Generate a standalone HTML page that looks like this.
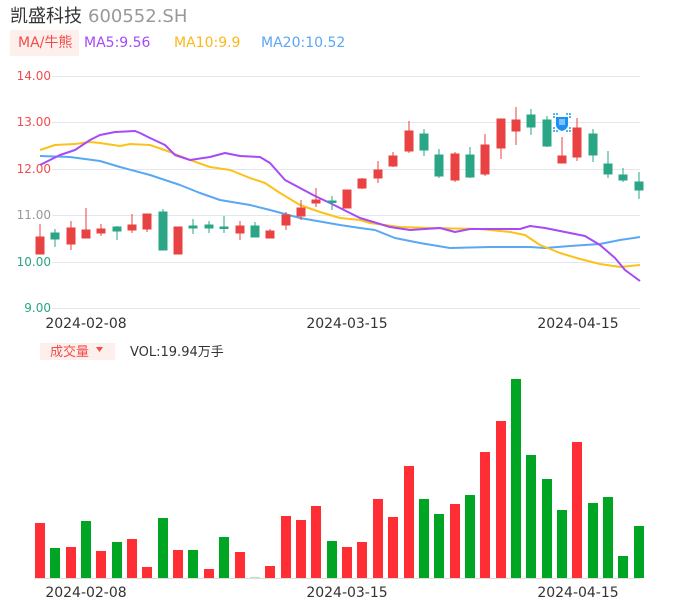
<!DOCTYPE html>
<html><head><meta charset="utf-8"><style>
body{margin:0;background:#fff;width:686px;height:606px;overflow:hidden;font-family:"DejaVu Sans","Noto Sans CJK SC",sans-serif}
svg{position:absolute;left:0;top:0}
</style></head><body>
<svg width="686" height="606" xmlns="http://www.w3.org/2000/svg" font-family="DejaVu Sans, Noto Sans CJK SC, sans-serif">
<text x="10" y="22" font-size="18" fill="#333" font-family="Noto Sans CJK SC, sans-serif">凯盛科技</text>
<text x="88" y="22" font-size="18" fill="#999">600552.SH</text>
<rect x="10" y="30" width="69" height="26" fill="#fdf0ec"/>
<text x="18" y="47" font-size="14" fill="#f24b4b">MA/<tspan font-family="Noto Sans CJK SC, sans-serif">牛熊</tspan></text>
<text x="84" y="47" font-size="14" fill="#a649f7">MA5:9.56</text>
<text x="174" y="47" font-size="14" fill="#fcb81a">MA10:9.9</text>
<text x="261" y="47" font-size="14" fill="#5aa7f3">MA20:10.52</text>
<g stroke="#e3e6ef" stroke-width="1">
<line x1="52" x2="640" y1="76.5" y2="76.5"/><line x1="52" x2="640" y1="122.5" y2="122.5"/><line x1="52" x2="640" y1="169.5" y2="169.5"/><line x1="52" x2="640" y1="215.5" y2="215.5"/><line x1="52" x2="640" y1="262.5" y2="262.5"/><line x1="52" x2="640" y1="308.5" y2="308.5"/>
</g>
<g font-size="12" text-anchor="end">
<text x="51" y="80" fill="#f24b4b">14.00</text><text x="51" y="126" fill="#f24b4b">13.00</text><text x="51" y="173" fill="#f24b4b">12.00</text><text x="51" y="219" fill="#999">11.00</text><text x="51" y="266" fill="#2aa586">10.00</text><text x="51" y="312" fill="#2aa586">9.00</text>
</g>
<g font-size="14" fill="#333" text-anchor="middle">
<text x="86" y="328">2024-02-08</text><text x="347" y="328">2024-03-15</text><text x="578" y="328">2024-04-15</text>
<text x="86" y="597">2024-02-08</text><text x="347" y="597">2024-03-15</text><text x="578" y="597">2024-04-15</text>
</g>
<g fill="none" stroke-width="2" stroke-linejoin="round">
<polyline stroke="#5aa7f3" points="40,156 70,157 100,161 120,167 150,175 180,185 200,193 220,200 250,205 270,210 300,218 340,225 360,228 375,230 395,238 420,243 450,248 490,247 530,247 545,248 570,246 600,244 620,240 640,237"/>
<polyline stroke="#fcc21a" points="40,150 55,145 75,144 90,142 100,143 120,146 130,144 150,145 170,152 190,160 210,167 230,170 250,178 265,183 280,193 300,205 320,212 340,218 360,220 370,223 400,227 430,228 480,229 510,232 525,235 540,245 560,253 580,259 600,264 620,267 640,265"/>
<polyline stroke="#a649f7" points="40,165 60,155 75,150 90,140 100,135 115,132 135,131 140,133 150,138 165,145 175,155 190,160 210,157 225,153 240,156 260,157 270,163 285,180 300,188 315,196 330,203 360,218 390,227 410,230 440,228 455,232 470,229 520,229 530,226 545,228 570,233 585,236 600,245 615,258 625,270 640,281"/>
</g>
<g stroke-width="1">
<g stroke="#e84242" fill="#e84242">
<line x1="40" x2="40" y1="224" y2="254"/><rect x="36" y="237" width="8" height="17"/>
<line x1="71" x2="71" y1="221" y2="250"/><rect x="67" y="228" width="8" height="16"/>
<line x1="86" x2="86" y1="208" y2="238"/><rect x="82" y="230" width="8" height="8"/>
<line x1="101" x2="101" y1="224" y2="236"/><rect x="97" y="229" width="8" height="4"/>
<line x1="132" x2="132" y1="214" y2="233"/><rect x="128" y="225" width="8" height="5"/>
<line x1="147" x2="147" y1="214" y2="232"/><rect x="143" y="214" width="8" height="15"/>
<rect x="174" y="227" width="8" height="27"/>
<line x1="240" x2="240" y1="221" y2="240"/><rect x="236" y="226" width="8" height="7"/>
<line x1="270" x2="270" y1="229" y2="238"/><rect x="266" y="231" width="8" height="7"/>
<line x1="286" x2="286" y1="212" y2="230"/><rect x="282" y="215" width="8" height="10"/>
<line x1="301" x2="301" y1="200" y2="220"/><rect x="297" y="208" width="8" height="8"/>
<line x1="316" x2="316" y1="188" y2="207"/><rect x="312" y="200" width="8" height="3"/>
<rect x="343" y="190" width="8" height="18"/>
<line x1="362" x2="362" y1="178" y2="189"/><rect x="358" y="179" width="8" height="9"/>
<line x1="378" x2="378" y1="161" y2="183"/><rect x="374" y="170" width="8" height="8"/>
<line x1="393" x2="393" y1="152" y2="167"/><rect x="389" y="156" width="8" height="10"/>
<line x1="409" x2="409" y1="121" y2="153"/><rect x="405" y="131" width="8" height="20"/>
<line x1="455" x2="455" y1="152" y2="182"/><rect x="451" y="154" width="8" height="26"/>
<line x1="485" x2="485" y1="134" y2="176"/><rect x="481" y="145" width="8" height="29"/>
<line x1="501" x2="501" y1="119" y2="159"/><rect x="497" y="119" width="8" height="29"/>
<line x1="516" x2="516" y1="107" y2="145"/><rect x="512" y="120" width="8" height="11"/>
<line x1="562" x2="562" y1="137" y2="163"/><rect x="558" y="156" width="8" height="7"/>
<line x1="577" x2="577" y1="118" y2="161"/><rect x="573" y="128" width="8" height="29"/>
</g>
<g stroke="#2aa586" fill="#2aa586">
<line x1="55" x2="55" y1="229" y2="247"/><rect x="51" y="233" width="8" height="6"/>
<line x1="117" x2="117" y1="226" y2="240"/><rect x="113" y="227" width="8" height="4"/>
<line x1="163" x2="163" y1="209" y2="250"/><rect x="159" y="212" width="8" height="38"/>
<line x1="193" x2="193" y1="219" y2="234"/><rect x="189" y="226" width="8" height="2"/>
<line x1="209" x2="209" y1="221" y2="233"/><rect x="205" y="225" width="8" height="3"/>
<line x1="224" x2="224" y1="216" y2="233"/><rect x="220" y="227" width="8" height="1.5"/>
<line x1="255" x2="255" y1="222" y2="237"/><rect x="251" y="226" width="8" height="11"/>
<line x1="332" x2="332" y1="196" y2="210"/><rect x="328" y="201" width="8" height="1.5"/>
<line x1="424" x2="424" y1="129" y2="156"/><rect x="420" y="134" width="8" height="16"/>
<line x1="439" x2="439" y1="149" y2="178"/><rect x="435" y="155" width="8" height="21"/>
<line x1="470" x2="470" y1="147" y2="178"/><rect x="466" y="155" width="8" height="22"/>
<line x1="531" x2="531" y1="109" y2="135"/><rect x="527" y="115" width="8" height="12"/>
<line x1="547" x2="547" y1="116" y2="147"/><rect x="543" y="120" width="8" height="26"/>
<line x1="593" x2="593" y1="129" y2="162"/><rect x="589" y="134" width="8" height="21"/>
<line x1="608" x2="608" y1="151" y2="178"/><rect x="604" y="164" width="8" height="10"/>
<line x1="623" x2="623" y1="168" y2="182"/><rect x="619" y="175" width="8" height="5"/>
<line x1="639" x2="639" y1="172" y2="199"/><rect x="635" y="182" width="8" height="8"/>
</g>
</g>
<g>
<path d="M554 118v-4h4M566 114h4v4M570 127v4h-4M558 131h-4v-4" stroke="#1e9bf5" stroke-width="1.5" fill="none" stroke-dasharray="2 1"/>
<path d="M556 117h12v8q0 4-6 6q-6-2-6-6z" fill="#1e8ff5"/>
<rect x="559" y="119" width="6" height="6" fill="#7cc4ff"/>
</g>
<rect x="40" y="343" width="75" height="17" fill="#fdf0ec"/>
<text x="50" y="356" font-size="13" fill="#f24b4b" font-family="Noto Sans CJK SC, sans-serif">成交量</text>
<path d="M96 347h7l-3.5 5z" fill="#f24b4b"/>
<text x="130" y="356" font-size="13" fill="#333">VOL:19.94<tspan font-family="Noto Sans CJK SC, sans-serif">万手</tspan></text>
<line x1="34" x2="640" y1="578.5" y2="578.5" stroke="#ddd"/>
<g fill="#ff2e35">
<rect x="35" y="523" width="10" height="55"/><rect x="66" y="547" width="10" height="31"/><rect x="96" y="551" width="10" height="27"/><rect x="127" y="539" width="10" height="39"/><rect x="142" y="567" width="10" height="11"/><rect x="173" y="550" width="10" height="28"/><rect x="204" y="569" width="10" height="9"/><rect x="235" y="552" width="10" height="26"/><rect x="265" y="566" width="10" height="12"/><rect x="281" y="516" width="10" height="62"/><rect x="296" y="520" width="10" height="58"/><rect x="311" y="506" width="10" height="72"/><rect x="342" y="547" width="10" height="31"/><rect x="357" y="542" width="10" height="36"/><rect x="373" y="499" width="10" height="79"/><rect x="388" y="517" width="10" height="61"/><rect x="404" y="466" width="10" height="112"/><rect x="450" y="504" width="10" height="74"/><rect x="480" y="452" width="10" height="126"/><rect x="496" y="421" width="10" height="157"/><rect x="572" y="442" width="10" height="136"/>
</g>
<g fill="#00a524">
<rect x="50" y="548" width="10" height="30"/><rect x="81" y="521" width="10" height="57"/><rect x="112" y="542" width="10" height="36"/><rect x="158" y="518" width="10" height="60"/><rect x="188" y="550" width="10" height="28"/><rect x="219" y="537" width="10" height="41"/><rect x="250" y="577" width="10" height="1" fill="#b6e6c0"/><rect x="327" y="541" width="10" height="37"/><rect x="419" y="499" width="10" height="79"/><rect x="434" y="514" width="10" height="64"/><rect x="465" y="495" width="10" height="83"/><rect x="511" y="379" width="10" height="199"/><rect x="526" y="455" width="10" height="123"/><rect x="542" y="479" width="10" height="99"/><rect x="557" y="510" width="10" height="68"/><rect x="588" y="503" width="10" height="75"/><rect x="603" y="497" width="10" height="81"/><rect x="618" y="556" width="10" height="22"/><rect x="634" y="526" width="10" height="52"/>
</g>
</svg>
</body></html>
